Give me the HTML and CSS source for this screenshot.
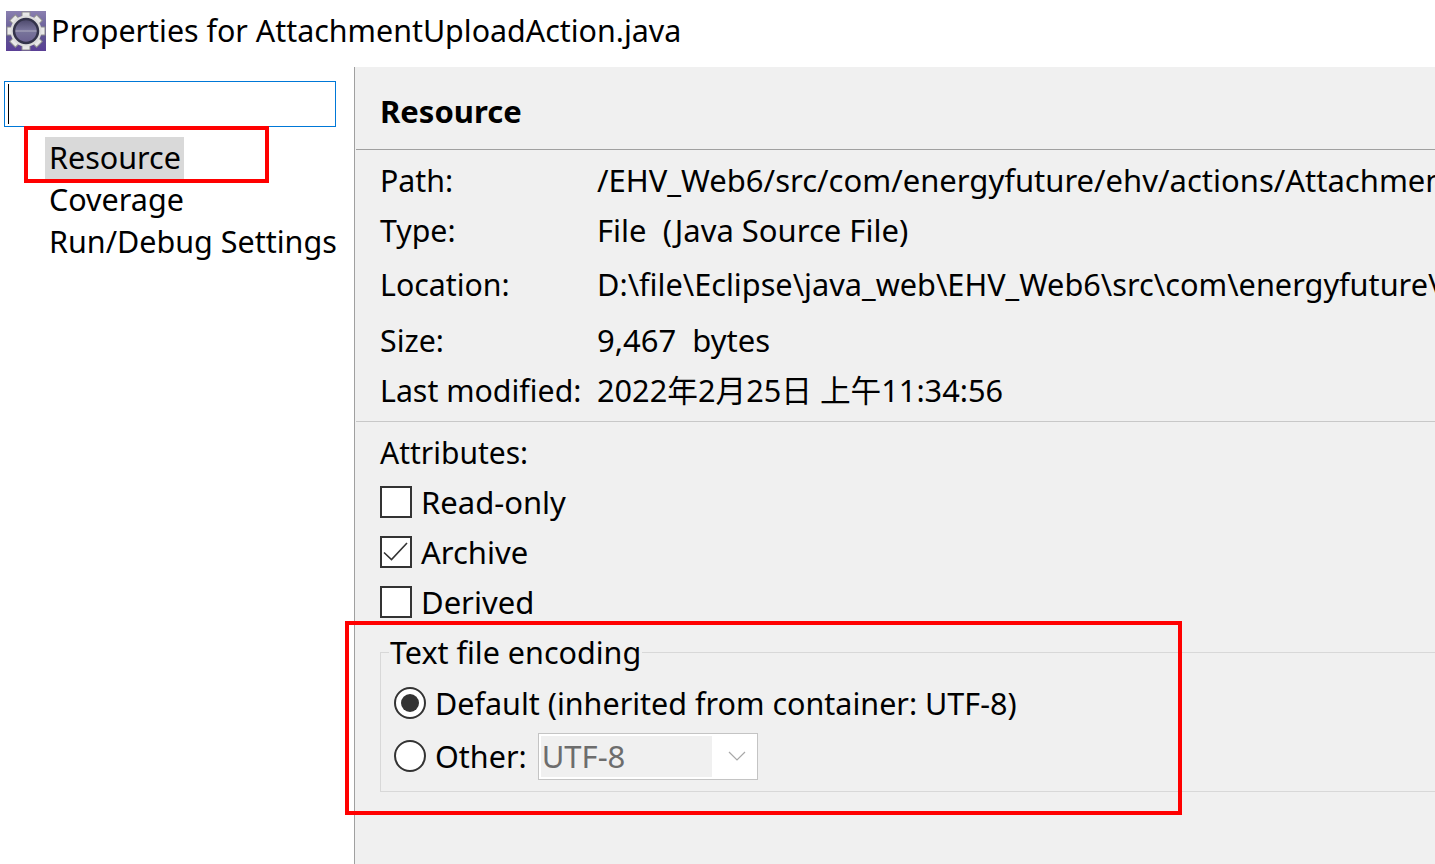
FILE: index.html
```html
<!DOCTYPE html>
<html>
<head>
<meta charset="utf-8" />
<title>Properties for AttachmentUploadAction.java</title>
<link rel="stylesheet" href="styles.css">
</head>
<body>
<div class="title">
	<svg class="title_icon" width="40" height="40" viewBox="0 0 40 40">
		<defs>
			<linearGradient id="bg" x1="0" y1="0" x2="0" y2="1">
				<stop offset="0" stop-color="#8a80b0"/>
				<stop offset="0.6" stop-color="#5f5590"/>
				<stop offset="1" stop-color="#5a3f96"/>
			</linearGradient>
			<linearGradient id="core" x1="0" y1="0" x2="0" y2="1">
				<stop offset="0" stop-color="#4a4668"/>
				<stop offset="0.45" stop-color="#77739a"/>
				<stop offset="0.5" stop-color="#a8a6bc"/>
				<stop offset="0.55" stop-color="#77739a"/>
				<stop offset="1" stop-color="#6a6090"/>
			</linearGradient>
		</defs>
		<rect width="40" height="40" fill="url(#bg)"/>
		<g fill="#e8e8e8" stroke="#8c8c8c" stroke-width="1">
			<rect x="16" y="1" width="8" height="38"/>
			<rect x="1" y="16" width="38" height="8"/>
			<rect x="16" y="1" width="8" height="38" transform="rotate(45 20 20)"/>
			<rect x="16" y="1" width="8" height="38" transform="rotate(-45 20 20)"/>
		</g>
		<circle cx="20" cy="20" r="15.5" fill="#dcdcdc"/>
		<circle cx="20" cy="20" r="12" fill="url(#core)" stroke="#33334a" stroke-width="2.5"/>
	</svg>
	<span>Properties for AttachmentUploadAction.java</span>
</div>
<div class="main">
	<div class="side">
		<div class="search"><i class="caret"></i></div>
		<ul class="tree">
			<li><span class="active">Resource</span></li>
			<li><span>Coverage</span></li>
			<li><span>Run/Debug Settings</span></li>
		</ul>
	</div>
	<div class="panel">
		<h1 class="panel_head">Resource</h1>
		<div class="info">
			<div class="row r1"><label>Path:</label><span>/EHV_Web6/src/com/energyfuture/ehv/actions/AttachmentUploadAction.java</span></div>
			<div class="row r2"><label>Type:</label><span>File&nbsp; (Java Source File)</span></div>
			<div class="row r3"><label>Location:</label><span class="loc">D:\file\Eclipse\java_web\EHV_Web6\src\com\energyfuture\ehv\actions\AttachmentUploadAction.java</span></div>
			<div class="row r4"><label>Size:</label><span>9,467&nbsp; bytes</span></div>
			<div class="row r5"><label>Last modified:</label><span class="date">2022年2月25日 上午11:34:56</span></div>
		</div>
		<div class="attrs">
			<div class="attrs_title">Attributes:</div>
			<div class="check"><i class="box"></i>Read-only</div>
			<div class="check"><i class="box"><svg width="28" height="28" viewBox="0 0 28 28"><path d="M2 14.5 L9.5 21.5 L25 5" fill="none" stroke="#333" stroke-width="1.6"/></svg></i>Archive</div>
			<div class="check"><i class="box"></i>Derived</div>
		</div>
		<fieldset class="enc">
			<legend>Text file encoding</legend>
			<div class="radio_row first"><i class="radio on"></i>Default (inherited from container: UTF-8)</div>
			<div class="radio_row"><i class="radio"></i>Other:
				<div class="combo">
					<span class="combo_val">UTF-8</span>
					<svg class="combo_arrow" width="18" height="10" viewBox="0 0 18 10"><path d="M1 1 L9 9 L17 1" fill="none" stroke="#a8a8a8" stroke-width="1.2"/></svg>
				</div>
			</div>
		</fieldset>
	</div>
</div>
<div class="mark mark1"></div>
<div class="mark mark2"></div>
</body>
</html>
```

FILE: styles.css
```css
*{ margin:0; padding:0; box-sizing:border-box;}
li{ list-style:none;}
i{ font-style:normal;}
html,body{ height:100%; overflow:hidden;}
body{ background:#fff; color:#000; font:31px/42px "Noto Sans","Noto Sans CJK SC",sans-serif; position:relative;}

.title{ height:67px; display:flex; align-items:flex-start; padding:11px 0 0 6px; white-space:nowrap; font-size:30.4px;}
.title_icon{ flex:none; margin-right:5px;}
.title span{ margin-top:-1px;}

.main{ display:flex; height:797px;}
.side{ width:355px; flex:none; border-right:1px solid #a0a0a0; padding:14px 0 0 4px;}
.search{ width:332px; height:46px; border:1px solid #0078d7; padding:2px 3px;}
.caret{ display:block; width:1px; height:40px; background:#000;}
.tree{ padding:10px 0 0 41px; font-size:30.5px;}
.tree li{ height:42px; line-height:40px; white-space:nowrap;}
.tree span{ display:inline-block; height:43px; padding:0 3px 0 4px;}
.tree .active{ background:#d9d9d9;}

.panel{ flex:1; min-width:0; background:#f0f0f0; overflow:hidden; white-space:nowrap;}
.panel_head{ height:83px; border-bottom:1px solid #a0a0a0; padding:23px 0 0 24px; font-size:31px; font-weight:bold; line-height:42px; margin-left:1px;}
.info{ padding:10px 0 0 24px; height:272px; border-bottom:1px solid #c8c8c8; margin-left:1px;}
.row{ display:flex;}
.row label{ width:217px; flex:none; font-size:30.3px;}
.row span{ margin-top:-1px;}
.row .loc{ font-size:30.7px;}
.row .date{ font-size:30.7px;}
.r1{ height:50px;}
.r2{ height:54px;}
.r3{ height:56px;}
.r4{ height:50px;}
.r5{ height:50px;}

.attrs{ padding:9px 0 0 25px;}
.attrs_title{ height:46px; line-height:44px; font-size:30px;}
.check{ height:50px; display:flex; align-items:center;}
.box{ width:32px; height:32px; border:2px solid #333; background:#fff; margin-right:9px; flex:none; display:block;}
.box svg{ display:block; margin:0;}

.enc{ margin:4px 0 0 25px; border:1px solid #d8d8d8; border-right:0; height:161px; padding:0 0 0 13px; display:block; font-size:30.5px;}
.enc legend{ margin-left:-5px; line-height:42px; padding:0 1px; }
.radio_row{ display:flex; align-items:center; height:50px;}
.radio_row.first{ margin-top:1px; height:57px;}
.radio{ width:32px; height:32px; border:2px solid #333; border-radius:50%; background:#fff; margin-right:9px; flex:none; display:block;}
.radio.on:after{ content:""; display:block; width:18px; height:18px; margin:5px; border-radius:50%; background:#333;}
.combo{ width:220px; height:47px; margin-left:11px; border:1px solid #c4c4c4; background:#fff; padding:2px; display:flex; align-items:center;}
.combo_val{ width:171px; height:41px; background:#f0f0f0; color:#6d6d6d; padding-left:1px; line-height:41px; font-size:31px;}
.combo_arrow{ margin-left:16px;}

.mark{ position:absolute; border:4px solid #f00;}
.mark1{ left:24px; top:126px; width:245px; height:57px;}
.mark2{ left:345px; top:621px; width:837px; height:194px;}
```
